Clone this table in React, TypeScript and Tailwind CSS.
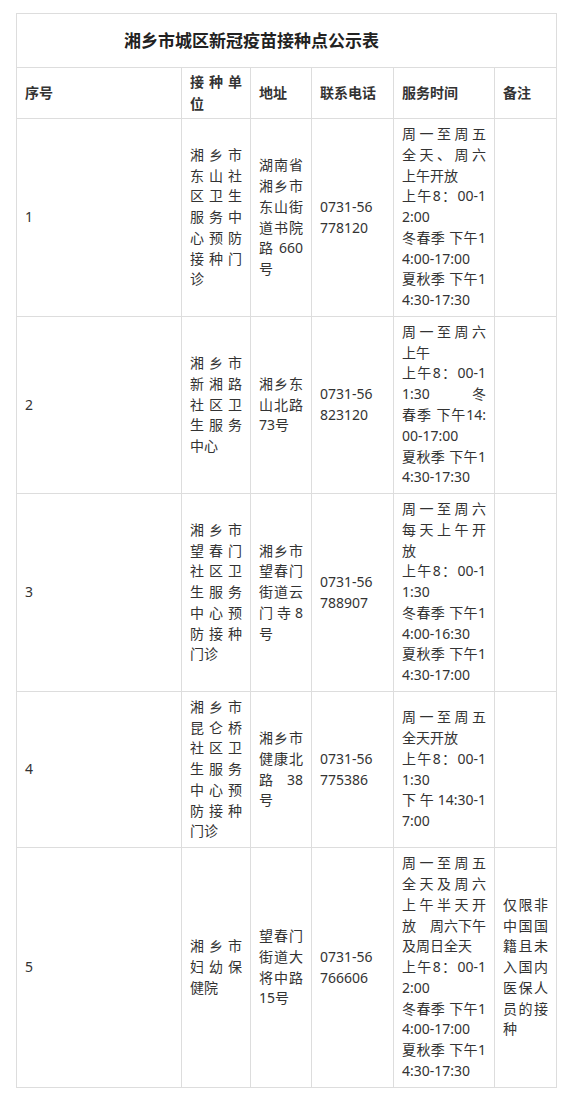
const rows = [
  {
    no: "1",
    unit: "湘乡市/东山社/区卫生/服务中/心预防/接种门/诊",
    addr: "湖南省/湘乡市/东山街/道书院/路 660/号",
    tel: "0731-56/778120",
    time: "周一至周五/全天、周六/上午开放\n上午8：00-1/2:00\n冬春季 下午1/4:00-17:00\n夏秋季 下午1/4:30-17:30",
    note: "",
  },
  {
    no: "2",
    unit: "湘乡市/新湘路/社区卫/生服务/中心",
    addr: "湘乡东/山北路/73号",
    tel: "0731-56/823120",
    time: "周一至周六/上午\n上午8：00-1/1:30 冬/春季 下午14:/00-17:00\n夏秋季 下午1/4:30-17:30",
    note: "",
  },
  {
    no: "3",
    unit: "湘乡市/望春门/社区卫/生服务/中心预/防接种/门诊",
    addr: "湘乡市/望春门/街道云/门寺8/号",
    tel: "0731-56/788907",
    time: "周一至周六/每天上午开/放\n上午8：00-1/1:30\n冬春季 下午1/4:00-16:30\n夏秋季 下午1/4:30-17:00",
    note: "",
  },
  {
    no: "4",
    unit: "湘乡市/昆仑桥/社区卫/生服务/中心预/防接种/门诊",
    addr: "湘乡市/健康北/路 38/号",
    tel: "0731-56/775386",
    time: "周一至周五/全天开放\n上午8：00-1/1:30\n下午14:30-1/7:00",
    note: "",
  },
  {
    no: "5",
    unit: "湘乡市/妇幼保/健院",
    addr: "望春门/街道大/将中路/15号",
    tel: "0731-56/766606",
    // the "放 周六下午" line keeps its own gap, so it is not stretched
    time: "周一至周五/全天及周六/上午半天开/放\u3000周六下午\n及周日全天\n上午8：00-1/2:00\n冬春季 下午1/4:00-17:00\n夏秋季 下午1/4:30-17:30",
    note: "仅限非/中国国/籍且未/入国内/医保人/员的接/种",
  },
];

function Lines({ text }: { text: string }) {
  return (
    <div className="w-full">
      {text.split("\n").map((para, i) => {
        const lines = para.split("/");
        return lines.map((l, j) => (
          <div
            key={i + "-" + j}
            className={j < lines.length - 1 ? "whitespace-nowrap [text-align-last:justify]" : "whitespace-nowrap"}
          >
            {l}
          </div>
        ));
      })}
    </div>
  );
}

function Cell({ children, head }: { children?: React.ReactNode; head?: boolean }) {
  return (
    <div
      className={
        "flex items-center border-r border-b border-[#dddddd] px-2 " +
        (head ? "font-bold leading-[22.4px]" : "leading-[20.8px]")
      }
    >
      {children}
    </div>
  );
}

export default function App() {
  return (
    <div className="min-h-[1110px] bg-white pt-[13px] pl-[16px] font-['Noto_Sans','Noto_Sans_CJK_SC',sans-serif] text-[14px] text-[#333333]">
      <div className="grid w-[541px] grid-cols-[165px_69px_61px_82px_101px_62px] grid-rows-[54px_51px_198px_177px_198px_156px_240px] border-t border-l border-[#dddddd]">
        <div className="col-span-6 flex items-center border-r border-b border-[#dddddd] pl-[107px] text-[17px] font-semibold text-[#222222]">
          湘乡市城区新冠疫苗接种点公示表
        </div>

        <Cell head>序号</Cell>
        <Cell head>
          <Lines text="接种单/位" />
        </Cell>
        <Cell head>地址</Cell>
        <Cell head>联系电话</Cell>
        <Cell head>服务时间</Cell>
        <Cell head>备注</Cell>

        {rows.map((r) => (
          <div key={r.no} className="contents">
            <Cell>{r.no}</Cell>
            <Cell>
              <Lines text={r.unit} />
            </Cell>
            <Cell>
              <Lines text={r.addr} />
            </Cell>
            <Cell>
              <Lines text={r.tel} />
            </Cell>
            <Cell>
              <Lines text={r.time} />
            </Cell>
            <Cell>{r.note && <Lines text={r.note} />}</Cell>
          </div>
        ))}
      </div>
    </div>
  );
}
